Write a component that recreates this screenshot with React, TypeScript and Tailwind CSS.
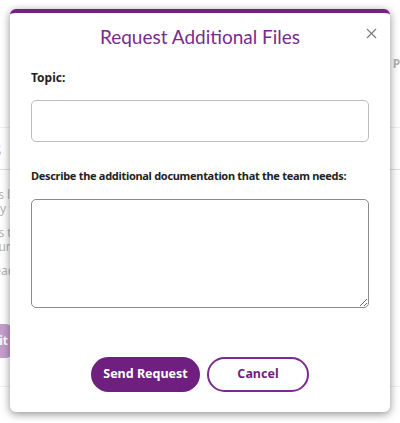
import React from 'react';
import { X } from 'lucide-react';

const notes = [
  ['Your Files list contains all the instructions', 'as sent by the team so far'],
  ['Most files that are needed will be there with', 'a short summary'],
  ['Please read the sent files and items them', 'in order'],
];

const Backdrop = () => (
  <div className="h-[423px] w-[400px] bg-white text-[12px] text-[#555] font-['Noto_Sans',sans-serif]">
    <div className="flex h-[128px] items-center justify-end border-b border-[#ddd]">
      <span className="mr-[-40px] font-bold text-[#555]">Preview</span>
    </div>
    <div className="ml-[-40px] flex h-[42px] items-center border-b border-[#c9a6d4]">
      <span className="text-[20px] text-[#7b2a8f]">Files</span>
    </div>
    <div className="ml-[-50px] flex w-[540px] flex-col gap-[10px] pt-[18px] leading-[14px]">
      {notes.map((n, i) => (
        <p key={i}>
          <span className="block">{n[0]}</span>
          <span className="block">{n[1]}</span>
        </p>
      ))}
    </div>
    <div className="ml-[-60px] mt-[32px] flex h-[34px] w-[72px] items-center justify-end rounded-md bg-[#7b2a8f] pr-1 font-bold text-white">
      Edit
    </div>
    <div className="mt-[28px] border-b border-[#ddd]" />
  </div>
);

export default function App() {
  return (
    <div className="relative h-[423px] w-[400px] overflow-hidden">
      <Backdrop />
      <div className="absolute inset-0 bg-white/55" />
      <div className="absolute left-[10px] top-[9px] flex h-[403px] w-[380px] flex-col rounded-md border-t-4 border-[#761f87] bg-white shadow-[0_2px_8px_rgba(0,0,0,0.45)]">
        <button className="absolute right-[10px] top-[12px] text-[#777]">
          <X size={17} strokeWidth={1.5} />
        </button>
        <h2 className="pt-[11px] text-center font-['Lato',sans-serif] text-[19px] font-normal leading-[26px] text-[#7b2a8f]">
          Request Additional Files
        </h2>
        <div className="px-[21px] pt-[20px] font-['Noto_Sans',sans-serif] text-[#222]">
          <label className="block text-[12px] font-bold leading-[16px]">Topic:</label>
          <input className="mt-[14px] block h-[42px] w-full rounded-[5px] border border-[#bdbdbd] px-2 outline-none" />
          <label className="mt-[26px] block whitespace-nowrap text-[11px] font-bold leading-[16px] tracking-[-0.3px]">
            Describe the additional documentation that the team needs:
          </label>
          <textarea className="mt-[15px] block h-[109px] w-full rounded-[5px] border border-[#8a8a8a] px-2 outline-none" />
        </div>
        <div className="mt-[49px] flex justify-center gap-[7px] font-['Noto_Sans',sans-serif] text-[12.5px] font-bold">
          <button className="h-[35px] w-[109px] rounded-full bg-[#6f1f7f] text-white">Send Request</button>
          <button className="h-[35px] w-[102px] rounded-full border-2 border-[#7b2a8f] bg-white text-[#6f1f7f]">Cancel</button>
        </div>
      </div>
    </div>
  );
}
